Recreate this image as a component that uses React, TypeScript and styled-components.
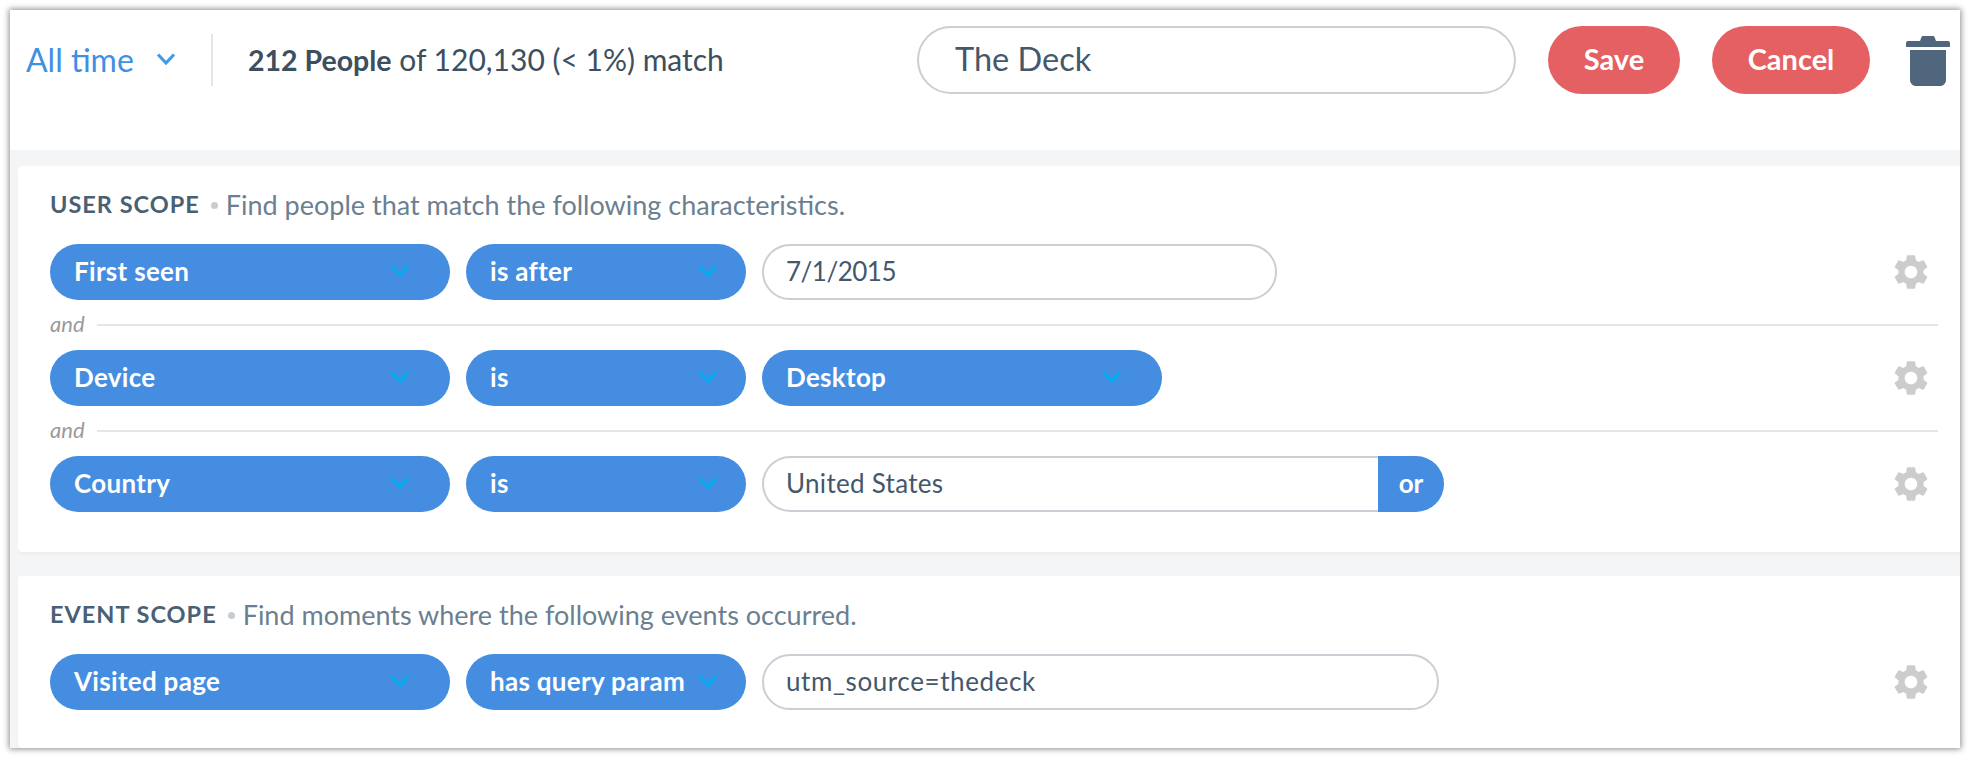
import * as React from "react";
import styled, { createGlobalStyle } from "styled-components";
import { MdSettings } from "react-icons/md";

const GlobalStyle = createGlobalStyle`
  html, body {
    margin: 0;
    padding: 0;
    background: #ffffff;
  }
  body {
    font-family: "Lato", "Open Sans", sans-serif;
    color: #3d4f5f;
  }
`;

const Chevron = ({ color }: { color: string }) => (
  <svg width={20} height={14} viewBox="0 0 20 14" fill="none">
    <path d="M2 2.500L10 11L18 2.500" stroke={color} strokeWidth="3.200" />
  </svg>
);

const TrashIcon = () => (
  <svg width="44" height="50" viewBox="0 0 44 50">
    <path d="M14 5l1.500-4c.2-.6.7-1 1.300-1h10.400c.6 0 1.100.4 1.300 1L30 5h12c1.100 0 2 .9 2 2v3.500c0 .3-.2.5-.5.5H.5c-.3 0-.5-.2-.5-.5V7c0-1.100.9-2 2-2z" fill="#4f667c" />
    <path d="M4 14h36v30c0 3.300-2.700 6-6 6H10c-3.300 0-6-2.700-6-6z" fill="#4f667c" />
  </svg>
);

type Condition = {
  field: string;
  operator: string;
  value: string;
  kind: "input" | "select" | "multi";
  valueWidth: number;
  tracking?: number;
};

const userConditions: Condition[] = [
  { field: "First seen", operator: "is after", value: "7/1/2015", kind: "input", valueWidth: 515, tracking: -0.5 },
  { field: "Device", operator: "is", value: "Desktop", kind: "select", valueWidth: 400 },
  { field: "Country", operator: "is", value: "United States", kind: "multi", valueWidth: 616 },
];

const eventConditions: Condition[] = [
  { field: "Visited page", operator: "has query param", value: "utm_source=thedeck", kind: "input", valueWidth: 677, tracking: 0.6 },
];

const ConditionRow = ({ condition }: { condition: Condition }) => (
  <Row>
    <Select $width={400} $endPadding={40}>
      {condition.field}
      <Chevron color="#00aeef" />
    </Select>
    <Select $width={280} $endPadding={28}>
      {condition.operator}
      <Chevron color="#00aeef" />
    </Select>
    {condition.kind === "select" && (
      <Select $width={condition.valueWidth} $endPadding={40}>
        {condition.value}
        <Chevron color="#00aeef" />
      </Select>
    )}
    {condition.kind === "input" && (
      <ValueInput $width={condition.valueWidth} $tracking={condition.tracking}>
        {condition.value}
      </ValueInput>
    )}
    {condition.kind === "multi" && (
      <Joined>
        <JoinedInput $width={condition.valueWidth}>{condition.value}</JoinedInput>
        <OrButton>or</OrButton>
      </Joined>
    )}
    <GearSlot>
      <MdSettings size={42} />
    </GearSlot>
  </Row>
);

const App = () => {
  return (
    <>
      <GlobalStyle />
      <Frame>
        <Header>
          <TimeRange>
            All time
            <Chevron color="#3f9be8" />
          </TimeRange>
          <Divider />
          <MatchText>
            <strong>212 People</strong> of 120,130 (&lt; 1%) match
          </MatchText>
          <NameInput>The Deck</NameInput>
          <RedButton $width={132}>Save</RedButton>
          <RedButton $width={158}>Cancel</RedButton>
          <TrashSlot>
            <TrashIcon />
          </TrashSlot>
        </Header>

        <Cards>
          <Card $height={386}>
            <CardTitle>
              <ScopeName>USER SCOPE</ScopeName>
              <ScopeDot />
              Find people that match the following characteristics.
            </CardTitle>
            {userConditions.map((condition, index) => (
              <React.Fragment key={condition.field}>
                {index > 0 && (
                  <AndRow>
                    <span>and</span>
                  </AndRow>
                )}
                <ConditionRow condition={condition} />
              </React.Fragment>
            ))}
          </Card>
          <Card $height={172}>
            <CardTitle>
              <ScopeName>EVENT SCOPE</ScopeName>
              <ScopeDot />
              Find moments where the following events occurred.
            </CardTitle>
            {eventConditions.map(condition => (
              <ConditionRow key={condition.field} condition={condition} />
            ))}
          </Card>
        </Cards>
      </Frame>
    </>
  );
};

const Frame = styled.div`
  width: 1950px;
  height: 738px;
  margin: 10px;
  background: #ffffff;
  box-shadow: 0 0 6px 1px rgba(0, 0, 0, 0.45);
  display: flex;
  flex-direction: column;
  overflow: hidden;
`;

const Header = styled.div`
  height: 140px;
  box-sizing: border-box;
  padding: 16px 10px 0 16px;
  display: flex;
  align-items: flex-start;
`;

const TimeRange = styled.div`
  width: 185px;
  height: 66px;
  display: flex;
  align-items: center;
  gap: 22px;
  font-size: 32px;
  color: #3f8fe3;
`;

const Divider = styled.div`
  width: 2px;
  height: 52px;
  margin-top: 8px;
  background: #e4e7ea;
`;

const MatchText = styled.div`
  width: 704px;
  height: 66px;
  padding-left: 35px;
  box-sizing: border-box;
  line-height: 66px;
  white-space: pre;
  font-size: 30px;
  color: #3d4f5f;

  strong {
    font-weight: 700;
    font-size: 28.500px;
  }
`;

const NameInput = styled.div`
  width: 599px;
  height: 68px;
  box-sizing: border-box;
  padding: 0 0 4px 36px;
  border: 2px solid #c9cfd4;
  border-radius: 34px;
  display: flex;
  align-items: center;
  font-size: 32.500px;
  color: #44586a;
`;

const RedButton = styled.div<{ $width: number }>`
  width: ${props => props.$width}px;
  height: 68px;
  padding-bottom: 4px;
  box-sizing: border-box;
  margin-left: 32px;
  border-radius: 34px;
  background: #e56062;
  color: #ffffff;
  font-size: 29px;
  font-weight: 700;
  display: flex;
  align-items: center;
  justify-content: center;
`;

const TrashSlot = styled.div`
  margin-left: 36px;
  padding-top: 10px;
  line-height: 0;
`;

const Cards = styled.div`
  flex: 1;
  background: #f4f5f7;
  padding: 16px 0 0 8px;
  display: flex;
  flex-direction: column;
  gap: 24px;
`;

const Card = styled.div<{ $height: number }>`
  height: ${props => props.$height}px;
  box-sizing: border-box;
  padding: 0 22px 0 32px;
  background: #ffffff;
  border-radius: 4px 0 0 4px;
  box-shadow: 0 3px 2px rgba(0, 0, 0, 0.03);
`;

const CardTitle = styled.div`
  height: 78px;
  box-sizing: border-box;
  padding-bottom: 2px;
  display: flex;
  align-items: center;
  font-size: 27px;
  color: #6b7f91;
`;

const ScopeName = styled.span`
  font-weight: 700;
  font-size: 23.500px;
  letter-spacing: 1px;
  color: #4a6074;
`;

const ScopeDot = styled.span`
  width: 7px;
  height: 7px;
  margin: 2px 8px 0 11px;
  border-radius: 50%;
  background: #c5ccd2;
`;

const Row = styled.div`
  display: flex;
  align-items: center;
  gap: 16px;
  height: 56px;
`;

const Select = styled.div<{ $width: number; $endPadding: number }>`
  width: ${props => props.$width}px;
  height: 56px;
  box-sizing: border-box;
  padding: 0 ${props => props.$endPadding}px 2px 24px;
  border-radius: 28px;
  background: #458de1;
  color: #ffffff;
  font-size: 26px;
  font-weight: 700;
  letter-spacing: 0.3px;
  display: flex;
  align-items: center;
  justify-content: space-between;
  white-space: nowrap;
`;

const ValueInput = styled.div<{ $width: number; $tracking?: number }>`
  width: ${props => props.$width}px;
  height: 56px;
  box-sizing: border-box;
  padding: 0 0 2px 22px;
  border: 2px solid #c9cfd4;
  border-radius: 28px;
  display: flex;
  align-items: center;
  font-size: 26px;
  letter-spacing: ${props => props.$tracking ?? 0.3}px;
  color: #44586a;
`;

const Joined = styled.div`
  display: flex;
`;

const JoinedInput = styled(ValueInput)`
  border-right: none;
  border-radius: 28px 0 0 28px;
`;

const OrButton = styled.div`
  width: 66px;
  height: 56px;
  box-sizing: border-box;
  padding: 0 0 2px 0;
  border-radius: 0 28px 28px 0;
  background: #458de1;
  color: #ffffff;
  font-size: 26px;
  font-weight: 700;
  display: flex;
  align-items: center;
  justify-content: center;
`;

const GearSlot = styled.div`
  margin-left: auto;
  margin-right: 6px;
  line-height: 0;
  color: #cccccc;
`;

const AndRow = styled.div`
  height: 50px;
  display: flex;
  align-items: center;
  gap: 12px;
  font-size: 22px;
  font-style: italic;
  color: #9a9a9a;

  span {
    margin-top: -4px;
  }

  &::after {
    content: "";
    flex: 1;
    height: 2px;
    background: #e4e7ea;
  }
`;

export default App;
